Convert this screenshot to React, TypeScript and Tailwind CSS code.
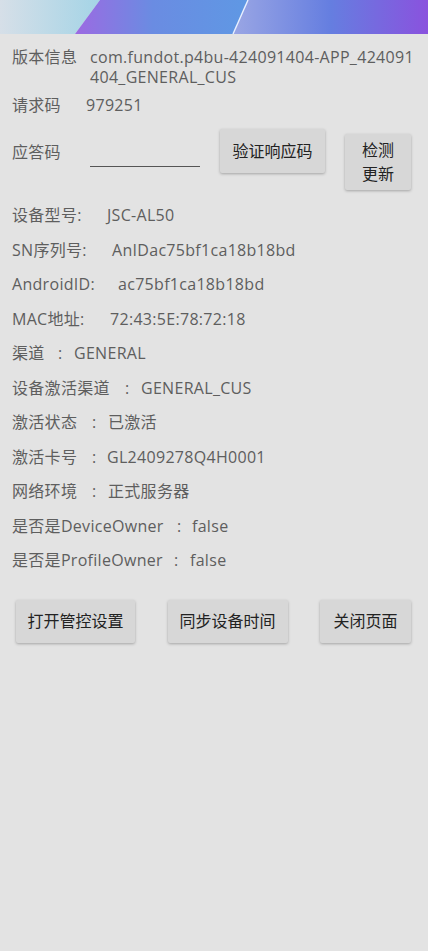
import React from 'react';

const Banner: React.FC = () => (
    <svg className="block h-[34px] w-full" viewBox="0 0 428 34" preserveAspectRatio="none">
        <defs>
            <linearGradient id="bnLeft" x1="0" y1="0" x2="100" y2="0" gradientUnits="userSpaceOnUse">
                <stop offset="0" stopColor="#d6dfe8" />
                <stop offset="1" stopColor="#a4d4e6" />
            </linearGradient>
            <linearGradient id="bnMid" x1="75" y1="0" x2="248" y2="0" gradientUnits="userSpaceOnUse">
                <stop offset="0" stopColor="#9c6ae2" />
                <stop offset="0.45" stopColor="#6a8ce2" />
                <stop offset="1" stopColor="#5f98e4" />
            </linearGradient>
            <linearGradient id="bnRight" x1="233" y1="0" x2="428" y2="0" gradientUnits="userSpaceOnUse">
                <stop offset="0" stopColor="#9aa6e4" />
                <stop offset="0.5" stopColor="#657ee0" />
                <stop offset="1" stopColor="#8a52de" />
            </linearGradient>
        </defs>
        <polygon points="0,0 100,0 75,34 0,34" fill="url(#bnLeft)" />
        <polygon points="100,0 248,0 233,34 75,34" fill="url(#bnMid)" />
        <polygon points="248,0 428,0 428,34 233,34" fill="url(#bnRight)" />
        <line x1="248" y1="0" x2="233" y2="34" stroke="#e8f0ff" strokeWidth="1.4" />
    </svg>
);

const Row: React.FC<{ children: React.ReactNode }> = ({ children }) => (
    <div className="flex h-[34.5px] items-center whitespace-nowrap leading-[34.5px]">{children}</div>
);

const ActionButton: React.FC<{ className: string; children: React.ReactNode }> = ({ className, children }) => (
    <button className={`rounded-[2px] bg-[#d7d7d7] text-[16px] tracking-normal text-[#222222] shadow-[0_1px_3px_rgba(0,0,0,0.28)] ${className}`}>
        {children}
    </button>
);

export default function App() {
    return (
        <div className="min-h-[951px] bg-[#e3e3e3] font-['Open_Sans','Noto_Sans_CJK_SC',sans-serif] text-[16px] tracking-[0.3px] text-[#5e5e5e]">
            <Banner />

            <div className="px-3 pt-[14px]">
                {/* 版本信息 */}
                <div className="flex leading-[19.5px]">
                    <span className="w-[78px] shrink-0">版本信息</span>
                    <span className="whitespace-nowrap">
                        com.fundot.p4bu-424091404-APP_424091
                        <br />
                        404_GENERAL_CUS
                    </span>
                </div>

                <div className="mt-[8px] flex leading-[20px]">
                    <span className="w-[74px] shrink-0">请求码</span>
                    <span>979251</span>
                </div>

                {/* 应答码 */}
                <div className="mt-[14px] flex items-start">
                    <span className="mt-[12px] w-[78px] shrink-0 leading-[22px]">应答码</span>
                    <div className="h-[38px] w-[110px] border-b border-[#555555]" />
                    <ActionButton className="ml-[20px] h-[44px] w-[105px]">验证响应码</ActionButton>
                    <ActionButton className="ml-[20px] mt-[5px] h-[56px] w-[66px] leading-[24px]">
                        检测
                        <br />
                        更新
                    </ActionButton>
                </div>

                <div className="mt-[8px]">
                    <Row>
                        <span className="w-[95px]">设备型号:</span>
                        <span>JSC-AL50</span>
                    </Row>
                    <Row>
                        <span className="w-[100px]">SN序列号:</span>
                        <span>AnIDac75bf1ca18b18bd</span>
                    </Row>
                    <Row>
                        <span className="w-[106px]">AndroidID:</span>
                        <span>ac75bf1ca18b18bd</span>
                    </Row>
                    <Row>
                        <span className="w-[98px]">MAC地址:</span>
                        <span>72:43:5E:78:72:18</span>
                    </Row>
                    <Row>
                        <span className="w-[46px]">渠道</span>
                        <span className="w-[16px]">:</span>
                        <span>GENERAL</span>
                    </Row>
                    <Row>
                        <span className="w-[113px]">设备激活渠道</span>
                        <span className="w-[16px]">:</span>
                        <span>GENERAL_CUS</span>
                    </Row>
                    <Row>
                        <span className="w-[80px]">激活状态</span>
                        <span className="w-[16px]">:</span>
                        <span>已激活</span>
                    </Row>
                    <Row>
                        <span className="w-[80px]">激活卡号</span>
                        <span className="w-[15px]">:</span>
                        <span>GL2409278Q4H0001</span>
                    </Row>
                    <Row>
                        <span className="w-[80px]">网络环境</span>
                        <span className="w-[16px]">:</span>
                        <span>正式服务器</span>
                    </Row>
                    <Row>
                        <span className="w-[165px]">是否是DeviceOwner</span>
                        <span className="w-[15px]">:</span>
                        <span>false</span>
                    </Row>
                    <Row>
                        <span className="w-[162px]">是否是ProfileOwner</span>
                        <span className="w-[16px]">:</span>
                        <span>false</span>
                    </Row>
                </div>
            </div>

            <div className="mt-[22px] flex justify-between pl-[16px] pr-[17px]">
                <ActionButton className="h-[43px] w-[119px]">打开管控设置</ActionButton>
                <ActionButton className="h-[43px] w-[120px]">同步设备时间</ActionButton>
                <ActionButton className="h-[43px] w-[91px]">关闭页面</ActionButton>
            </div>
        </div>
    );
}
